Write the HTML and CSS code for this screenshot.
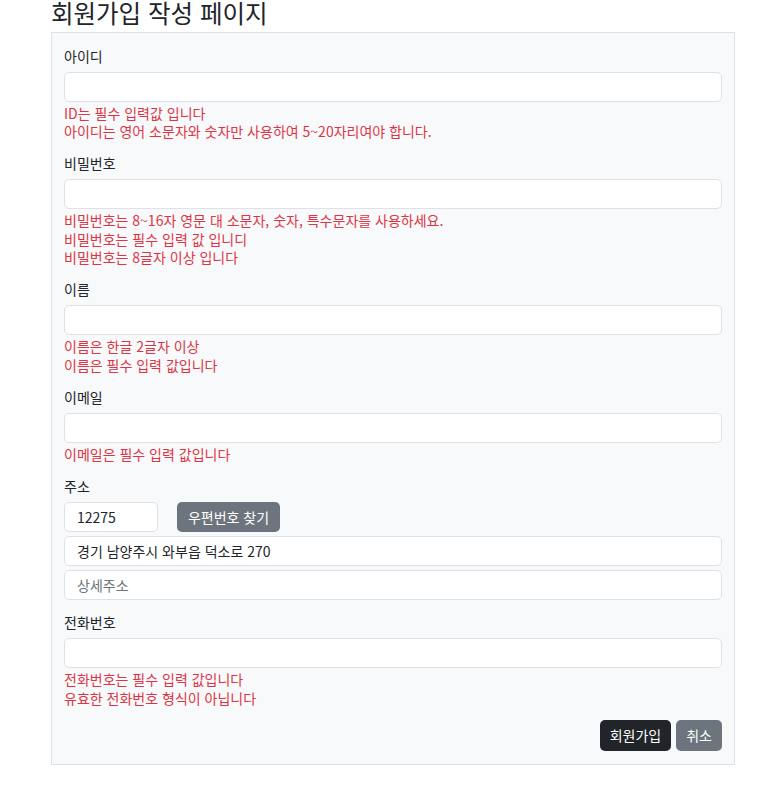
FILE: index.html
```html
<!DOCTYPE html>
<html lang="ko">
<head>
    <meta charset="UTF-8">
    <meta name="viewport" content="width=device-width, initial-scale=1.0">
    <title>회원가입 작성 페이지</title>
    <link rel="stylesheet" href="styles.css">
</head>
<body>

    <div class="page">
        <h1 class="page-title">회원가입 작성 페이지</h1>

        <form class="join-form">
            <div class="form-group">
                <label class="form-label" for="user_id">아이디</label>
                <input class="form-input" type="text" id="user_id">
                <div class="form-errors">
                    <div class="error">ID는 필수 입력값 입니다</div>
                    <div class="error">아이디는 영어 소문자와 숫자만 사용하여 5~20자리여야 합니다.</div>
                </div>
            </div>

            <div class="form-group">
                <label class="form-label" for="user_pw">비밀번호</label>
                <input class="form-input" type="password" id="user_pw">
                <div class="form-errors">
                    <div class="error">비밀번호는 8~16자 영문 대 소문자, 숫자, 특수문자를 사용하세요.</div>
                    <div class="error">비밀번호는 필수 입력 값 입니디</div>
                    <div class="error">비밀번호는 8글자 이상 입니다</div>
                </div>
            </div>

            <div class="form-group">
                <label class="form-label" for="user_name">이름</label>
                <input class="form-input" type="text" id="user_name">
                <div class="form-errors">
                    <div class="error">이름은 한글 2글자 이상</div>
                    <div class="error">이름은 필수 입력 값입니다</div>
                </div>
            </div>

            <div class="form-group">
                <label class="form-label" for="user_email">이메일</label>
                <input class="form-input" type="text" id="user_email">
                <div class="form-errors">
                    <div class="error">이메일은 필수 입력 값입니다</div>
                </div>
            </div>

            <div class="form-group">
                <label class="form-label" for="zipcode">주소</label>
                <div class="zip-row">
                    <input class="form-input zip-input" type="text" id="zipcode" value="12275">
                    <button type="button" class="btn btn-gray">우편번호 찾기</button>
                </div>
                <input class="form-input addr-input" type="text" value="경기 남양주시 와부읍 덕소로 270">
                <input class="form-input addr-input" type="text" placeholder="상세주소">
            </div>

            <div class="form-group">
                <label class="form-label" for="user_tel">전화번호</label>
                <input class="form-input" type="text" id="user_tel">
                <div class="form-errors">
                    <div class="error">전화번호는 필수 입력 값입니다</div>
                    <div class="error">유효한 전화번호 형식이 아닙니다</div>
                </div>
            </div>

            <div class="form-actions">
                <button type="submit" class="btn btn-dark">회원가입</button>
                <button type="button" class="btn btn-gray">취소</button>
            </div>
        </form>
    </div>

</body>
</html>
```

FILE: styles.css
```css
/* Join form page */
body {
    margin: 0;
    font-family: "Noto Sans CJK KR", "Noto Sans", sans-serif;
    font-size: 14px;
    color: #212529;
    background-color: #ffffff;
}
.page {
    width: 684px;
    margin-left: 51px;
}
.page-title {
    margin: 0 0 6px;
    font-size: 24.5px;
    font-weight: normal;
    line-height: 26px;
    color: #212529;
}
.join-form {
    padding: 12.5px 12px 13px;
    background-color: #f8f9fa;
    border: 1px solid #dee2e6;
}
.form-group {
    margin-bottom: 12.5px;
}
.form-label {
    display: block;
    line-height: 20px;
    margin-bottom: 6px;
}
.form-input {
    display: block;
    box-sizing: border-box;
    width: 100%;
    height: 30px;
    padding: 0 12px;
    font-family: inherit;
    font-size: 14px;
    color: #212529;
    background-color: #ffffff;
    border: 1px solid #dee2e6;
    border-radius: 5px;
    outline: none;
}
.form-input::placeholder {
    color: #6c757d;
}
.form-errors {
    margin-top: 2px;
}
.error {
    color: #dc3545;
    line-height: 18.5px;
}
.zip-row {
    display: flex;
    gap: 19px;
}
.zip-input {
    width: 94px;
}
.addr-input {
    margin-top: 4px;
}
.btn {
    height: 31px;
    padding: 0 10px;
    font-family: inherit;
    font-size: 14px;
    color: #ffffff;
    border: none;
    border-radius: 5px;
    cursor: pointer;
}
.zip-row .btn {
    width: 103px;
    height: 30px;
}
.btn-gray {
    background-color: #6c757d;
}
.btn-dark {
    background-color: #212529;
}
.form-actions {
    display: flex;
    justify-content: flex-end;
    gap: 5px;
}
```
